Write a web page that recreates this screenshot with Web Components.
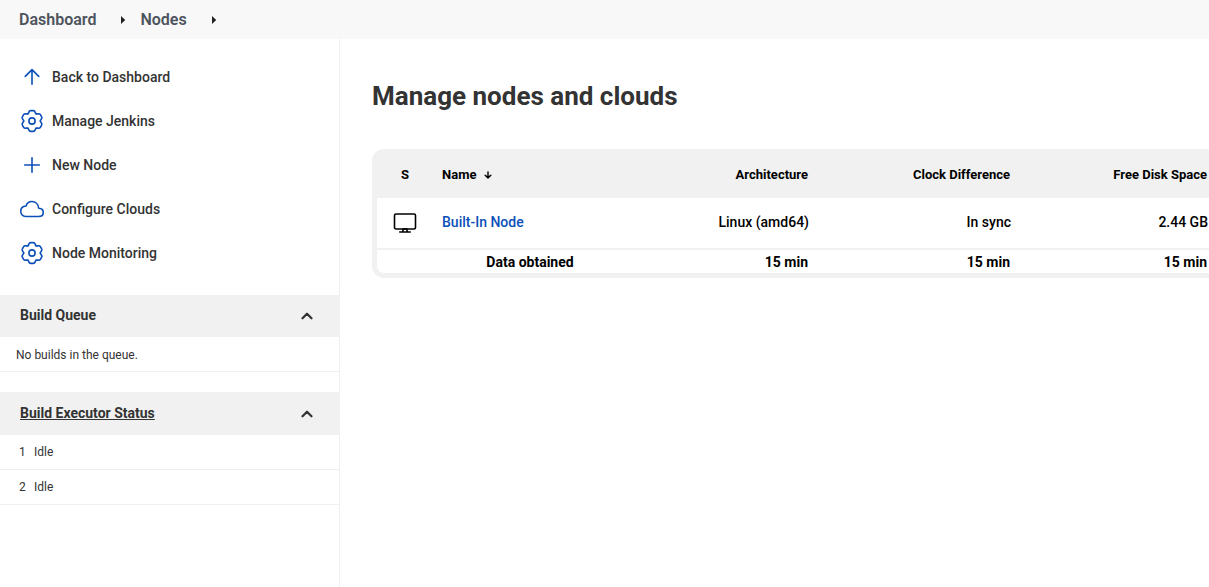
<!DOCTYPE html>
<html lang="en">
<head>
<meta charset="utf-8">
<meta name="viewport" content="width=device-width, initial-scale=1">
<title>Nodes</title>
<style>
  html, body { height: 100%; }
  body {
    margin: 0;
    font-family: Roboto, "Noto Sans", sans-serif;
    font-size: 14px;
    color: #333;
    background: #fff;
    overflow: hidden;
    --link: #0b4fb8;
    --panel: #f1f1f1;
    --bar: #f8f8f8;
    --crumb: #4d545d;
  }
</style>
</head>
<body>
<nodes-app></nodes-app>
<script>
const lobe = turn =>
  `<path transform="rotate(${turn} 256 256)" d="M167 102C193 87 182 34 228 34H284C330 34 319 87 345 102"/>`;

const ICONS = {
  up: '<path d="M112 244l144-144 144 144M256 120v292"/>',
  gear: '<circle cx="256" cy="256" r="66"/>' + [0, 60, 120, 180, 240, 300].map(lobe).join(''),
  plus: '<path d="M256 100v312M412 256H100"/>',
  cloud: '<path d="M400 240c-8.89-89.54-71-144-144-144-69 0-113.44 48.2-128 96-60 6-112 43.59-112 112 0 66 54 112 120 112h260c55 0 100-27.44 100-88 0-59.82-53-85.76-96-88z"/>',
  desktop: '<rect x="32" y="64" width="448" height="320" rx="32"/><path d="M304 448l-8-64h-80l-8 64zM368 448H144"/>',
  chevron: '<path stroke-width="72" d="M112 328l144-144 144 144"/>',
  sort: '<path stroke-width="92" d="M76 276l180 164 180-164M256 420V60"/>',
  caret: '<path fill="currentColor" stroke="none" d="M128 0l272 256-272 256z"/>'
};

function define(name, html, setup) {
  const template = document.createElement('template');
  template.innerHTML = html;
  customElements.define(name, class extends HTMLElement {
    constructor() {
      super();
      this.attachShadow({ mode: 'open' }).append(template.content.cloneNode(true));
    }
    connectedCallback() {
      if (setup) setup(this, this.shadowRoot);
    }
  });
}

define('ui-icon', `
  <style>
    :host { display: block; width: 24px; height: 24px; flex: none; }
    svg { display: block; width: 100%; height: 100%; fill: none; stroke: currentColor;
          stroke-width: 34; stroke-linecap: round; stroke-linejoin: round; overflow: visible; }
  </style>
  <svg viewBox="0 0 512 512" aria-hidden="true"></svg>
`, (host, root) => {
  root.querySelector('svg').innerHTML = ICONS[host.getAttribute('name')] || '';
});

define('crumb-bar', `
  <style>
    :host { display: block; background: var(--bar); }
    ol { display: flex; align-items: center; height: 39px; margin: 0; padding: 0 19px; list-style: none; }
    li { display: flex; align-items: center; }
    a { font-size: 16px; line-height: 20px; font-weight: 600; color: var(--crumb); text-decoration: none; }
    ui-icon { width: 8px; height: 8px; margin: 0 13px 0 23px; color: #222; }
  </style>
  <nav aria-label="Breadcrumb">
    <ol>
      <li><a href="#dashboard">Dashboard</a><ui-icon name="caret"></ui-icon></li>
      <li><a href="#nodes">Nodes</a><ui-icon name="caret"></ui-icon></li>
    </ol>
  </nav>
`);

define('task-link', `
  <style>
    :host { display: block; }
    a { display: flex; align-items: center; gap: 8px; height: 44px; padding: 0 20px;
        font-weight: 500; line-height: 20px; color: #333; text-decoration: none; }
    ui-icon { color: var(--link); }
  </style>
  <a><slot></slot></a>
`, (host, root) => {
  const link = root.querySelector('a');
  const icon = document.createElement('ui-icon');
  icon.setAttribute('name', host.getAttribute('icon'));
  link.href = host.getAttribute('href');
  link.prepend(icon);
});

define('side-pane', `
  <style>
    :host { display: block; margin-top: 20px; font-size: 12px; }
    header { display: flex; align-items: center; justify-content: space-between;
             height: var(--header-height, 42px); padding: 0 25px 0 20px; background: var(--panel); margin-right: -1px; }
    h2 { margin: 0; padding-bottom: 2px; font-size: 14px; line-height: 20px; font-weight: 700; }
    button { display: block; border: 0; padding: 0; background: none; color: #333; }
    ui-icon { width: 16px; height: 16px; }
  </style>
  <header>
    <h2><slot name="title"></slot></h2>
    <button type="button" aria-label="Collapse"><ui-icon name="chevron"></ui-icon></button>
  </header>
  <slot></slot>
`);

define('side-panel', `
  <style>
    :host { display: block; box-sizing: border-box; padding-top: 16px; border-right: 1px solid #f0f0f0; }
    a { color: inherit; text-decoration: underline; }
    .executors { --header-height: 43px; }
    p, td { line-height: 18px; }
    p { margin: 0; padding: 9px 16px 7px; border-bottom: 1px solid #f0f0f0; }
    table { width: 100%; border-collapse: separate; border-spacing: 0; }
    td { padding: 8px 0; border-bottom: 1px solid #f0f0f0; }
    td:first-child { box-sizing: border-box; width: 34px; padding-left: 19px; }
  </style>
  <nav aria-label="Tasks">
    <task-link icon="up" href="#back">Back to Dashboard</task-link>
    <task-link icon="gear" href="#manage">Manage Jenkins</task-link>
    <task-link icon="plus" href="#new">New Node</task-link>
    <task-link icon="cloud" href="#clouds">Configure Clouds</task-link>
    <task-link icon="gear" href="#monitoring">Node Monitoring</task-link>
  </nav>
  <side-pane>
    <span slot="title">Build Queue</span>
    <p>No builds in the queue.</p>
  </side-pane>
  <side-pane class="executors">
    <a slot="title" href="#executors">Build Executor Status</a>
    <table>
      <tr><td>1</td><td>Idle</td></tr>
      <tr><td>2</td><td>Idle</td></tr>
    </table>
  </side-pane>
`);

define('node-table', `
  <style>
    :host { display: block; color: #000; background: var(--panel); border: 5px solid var(--panel);
            border-radius: 12px; overflow: hidden; }
    table { width: 100%; table-layout: fixed; border-collapse: separate; border-spacing: 0; }
    .status { width: 56px; }
    .name { width: 194px; }
    .arch { width: 190px; }
    .clock { width: 202px; }
    th, td { box-sizing: border-box; padding: 0 9px; text-align: right; line-height: 20px; }
    thead th { height: 44px; padding-bottom: 2px; font-size: 13px; font-weight: 700; }
    tbody td { height: 50px; padding: 0 8px 2px 9px; background: #fff; font-weight: 500; }
    tbody td:first-child { padding: 0 9px; }
    tfoot th { height: 25px; border-top: 2px solid var(--panel); background: #fff; font-weight: 700; }
    tfoot th:first-child { border-bottom-left-radius: 5px; }
    thead th:first-child, tfoot th:nth-child(2) { text-align: center; }
    thead th:nth-child(2), tbody td:nth-child(2) { text-align: left; }
    .sort { display: flex; align-items: center; gap: 8px; }
    .sort ui-icon { width: 8px; height: 8px; }
    td ui-icon { margin: 0 auto; }
    a { color: var(--link); text-decoration: none; }
  </style>
  <table>
    <colgroup><col class="status"><col class="name"><col class="arch"><col class="clock"><col></colgroup>
    <thead>
      <tr>
        <th scope="col">S</th>
        <th scope="col" aria-sort="ascending"><span class="sort">Name<ui-icon name="sort"></ui-icon></span></th>
        <th scope="col">Architecture</th>
        <th scope="col">Clock Difference</th>
        <th scope="col">Free Disk Space</th>
      </tr>
    </thead>
    <tbody>
      <tr>
        <td><ui-icon name="desktop"></ui-icon></td>
        <td><a href="#built-in">Built-In Node</a></td>
        <td>Linux (amd64)</td>
        <td>In sync</td>
        <td>2.44 GB</td>
      </tr>
    </tbody>
    <tfoot>
      <tr><th></th><th>Data obtained</th><th>15 min</th><th>15 min</th><th>15 min</th></tr>
    </tfoot>
  </table>
`);

define('nodes-app', `
  <style>
    :host { display: grid; grid-template: auto 1fr / 340px minmax(0, 1fr); min-height: 100vh; }
    crumb-bar { grid-column: 1 / -1; }
    main { padding: 40px 0 0 32px; overflow: hidden; }
    h1 { margin: 0 0 36px; font-size: 26px; line-height: 34px; font-weight: 700; }
    /* the table runs on past the right edge of the window */
    node-table { margin-right: -12px; }
  </style>
  <crumb-bar></crumb-bar>
  <side-panel></side-panel>
  <main>
    <h1>Manage nodes and clouds</h1>
    <node-table></node-table>
  </main>
`);
</script>
</body>
</html>
